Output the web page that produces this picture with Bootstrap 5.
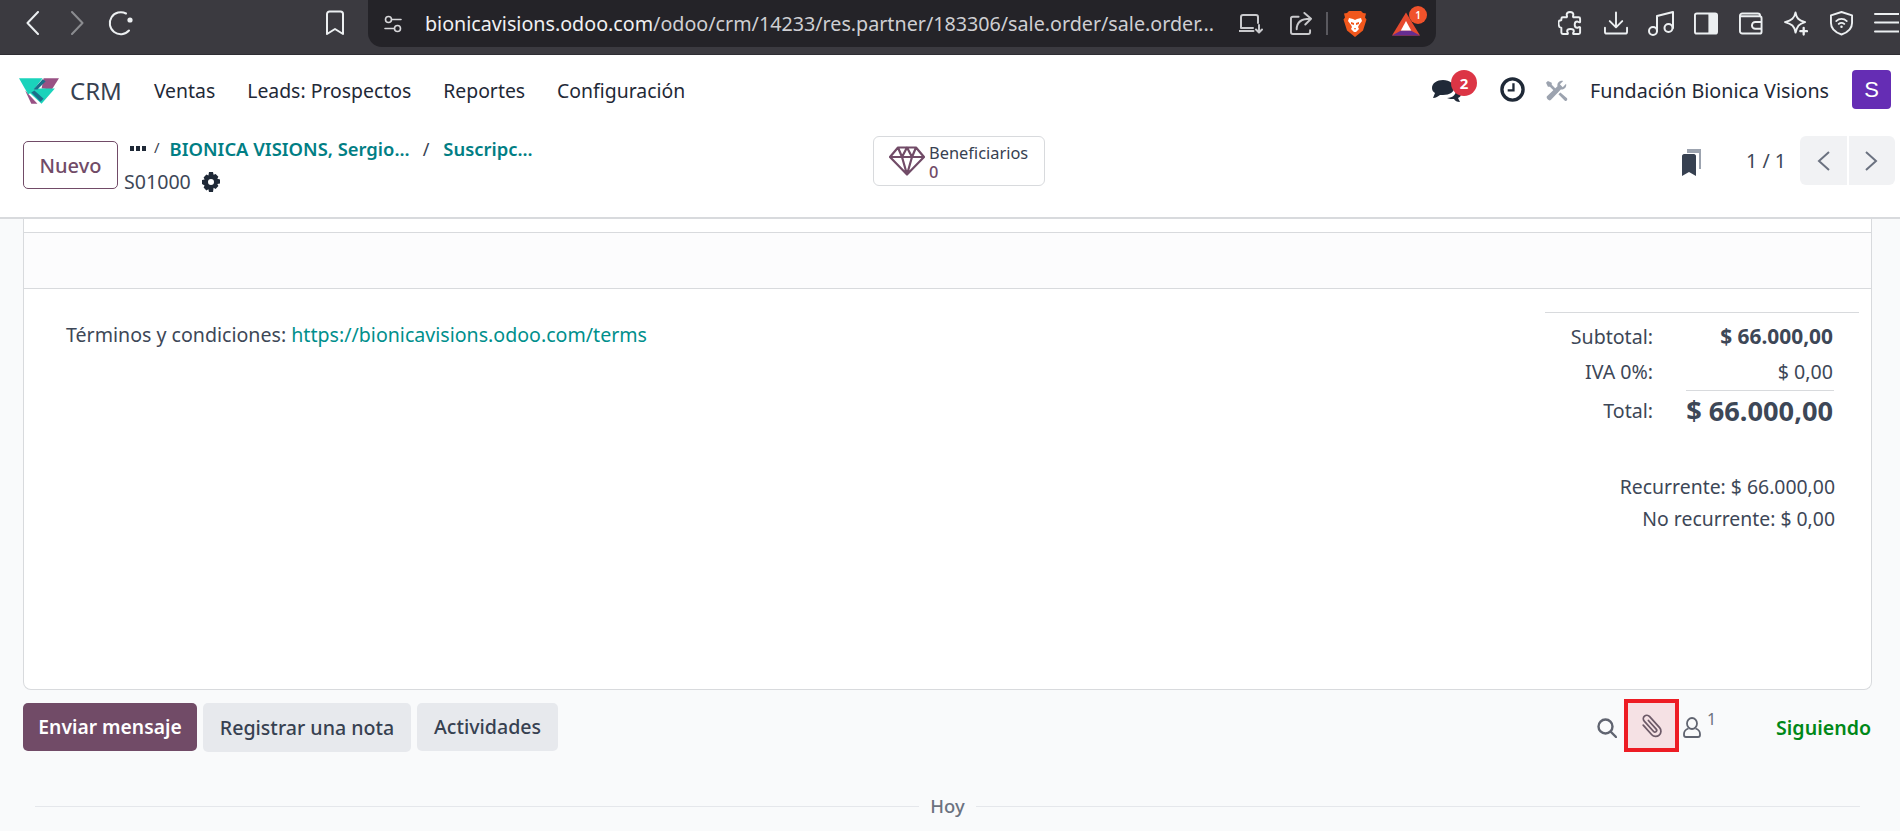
<!DOCTYPE html>
<html lang="es">
<head>
<meta charset="utf-8">
<title>CRM</title>
<link href="https://cdn.jsdelivr.net/npm/bootstrap@5.3.0/dist/css/bootstrap.min.css" rel="stylesheet">
<style>
html,body{height:831px;overflow:hidden}
body{font-family:"Noto Sans","Open Sans",sans-serif;font-size:19.6px;color:#3d4757;background:#f9fafb}
svg{display:block;flex:none}
.tb{height:55px;background:#3b3a40;border-bottom:1px solid #2e2d33;padding:0 1px 8px 26px}
.tb-ic{stroke:#eceff1;fill:none;stroke-width:2;stroke-linecap:round;stroke-linejoin:round}
.dim{opacity:.45}
.ml19{margin-left:19px}.ml20{margin-left:20px}.ml21{margin-left:21px}.ml22{margin-left:22px}.ml23{margin-left:23px}.ml24{margin-left:24px}.ml32{margin-left:32px}.ml122{margin-left:122px}.ml191{margin-left:191px}
.urlbar{width:1068px;height:47px;background:#242328;border-radius:0 0 14px 14px;align-self:flex-start;padding-left:16px;padding-top:0}
.urlic{stroke:#d7d7da;stroke-width:1.6}
.urlic2{stroke:#c9c9cc}
.urltxt{font-size:19.7px;color:#cfcfd3;margin-left:23px;width:814px;white-space:nowrap}
.urltxt b{font-weight:400;color:#f0f0f2}
.gap27{margin-left:27px}
.sep{width:2px;height:23px;background:#5a595f;margin:0 15px 0 14px}
.batw{margin-left:25px;width:28px;height:24px}
.bat-b{width:18px;height:18px;background:#f0522b;border-radius:50%;color:#fff;font-size:10px;line-height:18px;text-align:center;font-weight:600;top:-6px;left:17px}
.topnav{height:72px;background:#fff;padding-left:19px;padding-right:9px}
.appname{font-size:24px;color:#374151;margin-left:11px;margin-right:32px}
.menuit{color:#1f2937;margin-right:32px;font-size:19.4px}
.chatw{width:28px;height:23px}
.msgb{width:26px;height:26px;border-radius:50%;background:#dc3545;color:#fff;font-size:15px;font-weight:700;line-height:26px;text-align:center;top:-10px;left:19px}
.clk{margin-left:40px;margin-top:-3px}
.tls{margin-left:21px;margin-top:-2px}
.compny{color:#1f2937;font-size:19.7px;margin-left:22px;margin-right:23px}
.ava{width:39px;height:39px;background:#652db4;color:#fff;border-radius:4px;font-size:22px;font-family:"Liberation Sans",sans-serif;margin-top:-3px}
.cpanel{height:92px;background:#fff;border-bottom:2px solid #d8dadd;padding-left:23px;padding-right:5px}
.btn-nv{width:95px;height:48px;border:1px solid #714b67;border-radius:5px;background:#fff;color:#714b67;font-size:20px;font-weight:500;padding:2px 0 0;margin-top:14px}
.crumbs{margin-left:6px;margin-top:7px;width:749px}
.crumb1{height:30px;padding-left:6px}
.crumb2{height:36px}
.dots{margin-right:8px}
.tealb{color:#017e84;font-weight:600;font-size:18.4px}
.crsl{color:#374151;font-size:15px;margin-top:-4px}
.crsl2{color:#374151;font-size:18px;margin:0 14px 0 13px}
.bionica{margin-left:10px}
.gear{margin-left:10px}
.stat{width:172px;height:50px;border:1px solid #d8dadd;border-radius:6px;background:#fff;margin-top:9px;padding-left:15px}
.stat-t{font-size:16.4px;line-height:19.5px;color:#374151;margin-left:4px;padding-top:2px}
.stat-n{color:#714b67;font-weight:500}
.pgw{margin-top:9px}
.bmk{margin-top:4px}
.pgtxt{margin-left:45px;margin-right:14px}
.pgr{width:95px;height:49px;background:#f1f2f4;border-radius:6px}
.pgr>div{flex:1}
.pgr>div+div{border-left:2px solid #fff}
.main{padding:0 28px 0 23px}
.sheet{background:#fff;border:1px solid #d8dadd;border-top:0;border-radius:0 0 8px 8px;height:471px}
.r1{height:14px;background:#fff;border-bottom:1px solid #d8dadd}
.r2{height:56px;background:#fcfcfd;border-bottom:1px solid #d8dadd}
.terms{padding:23px 12px 0 42px}
.termtxt{margin-top:8px}
.terms a{color:#008f8c;text-decoration:none}
.totals{width:314px}
.tline{border-top:1px solid #d8dadd;height:7px}
.tline2{border-top:1px solid #d8dadd;margin:1px 25px 0 141px}
.tr-l{width:108px;text-align:right;flex:none}
.tr-v{flex:1;text-align:right}
.tr1{height:35px;padding-right:26px}
.tr2{height:40px;padding-right:26px}
.semi{font-size:20.9px;font-weight:700}
.big{font-size:27.2px;font-weight:700}
.recur{margin-top:40px;padding-right:24px;line-height:32px;font-size:19.4px}
.chat{padding-top:13px;height:61px}
.btn-p,.btn-g{height:48px;padding:0;border:0;border-radius:5px;font-size:19.6px;font-weight:500}
.btn-p{width:174px;background:#714b67;color:#fff;font-weight:600;font-size:19.3px}
.btn-g{background:#e7e9ed;color:#374151;margin-left:6px}
.w-reg{width:208px;height:49px}
.w-act{width:141px}
.redbox{width:55px;height:53px;border:4px solid #ed1c24;background:#f5e1e4;margin-left:7px;margin-top:-4px}
.persn{margin-left:4px}
.sig{color:#008818;font-weight:600;font-size:19.6px;margin-left:60px;margin-right:1px}
.uno{font-size:16px;color:#6b7280;margin-left:6px;margin-top:-18px;line-height:1}
.rule{height:1px;background:#e5e7eb;flex:1}
.hoy{font-size:18.4px;color:#6b7280;font-weight:500;margin:0 11px;line-height:1}
.daysep{margin:46px 12px 0}
</style>
</head>
<body>
<div class="tb d-flex align-items-center">
  <svg class="tb-ic" width="13" height="24" viewBox="0 0 13 24"><path d="M12 1 1.500 12 12 23"/></svg>
  <svg class="tb-ic dim ml32" width="13" height="24" viewBox="0 0 13 24"><path d="M1 1l10.500 11L1 23"/></svg>
  <svg class="tb-ic ml24" width="26" height="26" viewBox="0 0 26 26"><path d="M21 20.500a11 11 0 1 1-3-17"/><circle cx="22" cy="10" r="2.600" fill="#eceff1" stroke="none"/></svg>
  <svg class="tb-ic ml191" width="20" height="26" viewBox="0 0 20 26"><path d="M2 4a2.500 2.500 0 0 1 2.500-2.500h11A2.500 2.500 0 0 1 18 4v20l-8-5-8 5z"/></svg>
  <div class="urlbar d-flex align-items-center ml23">
    <svg class="tb-ic urlic" width="18" height="18" viewBox="0 0 18 18"><circle cx="4.500" cy="4.500" r="3"/><path d="M8 4.500h9M1 13.500h9"/><circle cx="13.500" cy="13.500" r="3"/></svg>
    <div class="urltxt"><b>bionicavisions.odoo.com</b>/odoo/crm/14233/res.partner/183306/sale.order/sale.order...</div>
    <svg class="tb-ic urlic2" width="24" height="20" viewBox="0 0 24 20"><path d="M2 14V3a2 2 0 0 1 2-2h13a2 2 0 0 1 2 2v6M0.500 17h14M3 14h11M20 11v7M17 15.500l3 3 3-3"/></svg>
    <svg class="tb-ic urlic2 gap27" width="22" height="23" viewBox="0 0 23 24"><path d="M9 5H3a2 2 0 0 0-2 2v14a2 2 0 0 0 2 2h16a2 2 0 0 0 2-2v-2M7 18c0-7 4-11 14-11M15 1l7 6-6 6"/></svg>
    <div class="sep"></div>
    <svg width="24" height="28" viewBox="0 0 24 28"><path fill="#f1571c" d="M6 1h12l2 2 3 .5-1 4 1.500 2-3.500 11-8 6.500-8-6.500L.5 9.500 2 7.500l-1-4L4 3z"/><path fill="#fff" d="M6 8l4 1 2 1 2-1 4-1 1 3-3 4-1 2 1 2-3 3h-2l-3-3 1-2-1-2-3-4z"/><path fill="#f1571c" d="M8 12l3 1v2l-3-1zM16 12l-3 1v2l3-1zM11 18h2l-1 2z"/></svg>
    <div class="position-relative batw">
      <svg width="28" height="24" viewBox="0 0 29 24"><path fill="#e64a2e" d="M14.500 0 29 24H0z"/><path fill="#fff" d="M14.500 9 20 19H9z"/><path fill="#662d91" d="M0 24l9-5h11l9 5z"/></svg>
      <div class="bat-b position-absolute">1</div>
    </div>
  </div>
  <svg class="tb-ic ml122" width="25" height="26" viewBox="0 0 26 26"><path d="M9 4.500c0-4 7-4 7 0 0 1-1 1.500 0 2.500h5.500a1.500 1.500 0 0 1 1.500 1.500v3.500c-1 1-2-.5-3-.5-3.500 0-3.500 6.500 0 6.500 1 0 2-1.500 3-.5v5.500a1.500 1.500 0 0 1-1.500 1.500H16c-1-1 .5-2 .5-3 0-3-7-3-7 0 0 1 1.500 2 .5 3H5a1.500 1.500 0 0 1-1.500-1.500V18c-1-1-2 .5-2.500-2-.5-1.500-.5-4 0-5 .5-1.500 1.500 0 2.500-1V8.500A1.500 1.500 0 0 1 5 7h4c1-1 0-1.500 0-2.500z"/></svg>
  <svg class="tb-ic ml21" width="24" height="24" viewBox="0 0 25 24"><path d="M12.500 1v15M6 10l6.500 6.500L19 10M1 17v4a2 2 0 0 0 2 2h19a2 2 0 0 0 2-2v-4"/></svg>
  <svg class="tb-ic ml20" width="26" height="26" viewBox="0 0 26 26"><path d="M9 21V6l16-4v16"/><circle cx="5" cy="21" r="4"/><circle cx="20.500" cy="18" r="4"/></svg>
  <svg class="ml20" width="24" height="23" viewBox="0 0 25 23"><rect x="1" y="1" width="23" height="21" rx="2" fill="none" stroke="#eceff1" stroke-width="2"/><path d="M15 1h7a2 2 0 0 1 2 2v17a2 2 0 0 1-2 2h-7z" fill="#eceff1"/></svg>
  <svg class="tb-ic ml21" width="24" height="23" viewBox="0 0 25 23"><path d="M22 4V3.500A2.500 2.500 0 0 0 19.500 1H3.500A2.500 2.500 0 0 0 1 3.500v16A2.500 2.500 0 0 0 3.500 22h18a2 2 0 0 0 2-2V6a2 2 0 0 0-2-2H1M23.500 10H17a3 3 0 0 0 0 7h6.500"/></svg>
  <svg class="tb-ic ml21" width="24" height="25" viewBox="0 0 25 25"><path d="M12 1c1 6 3 8 10 10-7 2-8 4-10 11C11 15 8 13 1 11c7-2 10-4 11-10z"/><path d="M20.500 17v7M17 20.500h7" stroke-width="2.400"/></svg>
  <svg class="tb-ic ml22" width="23" height="26" viewBox="0 0 24 26"><path d="M12 1.500 23 5v8c0 6-5 10-11 12C6 23 1 19 1 13V5z"/><path d="M6.500 11c3-3 8-3 11 0M9 14c2-1.500 4-1.500 6 0" stroke-width="1.800"/><circle cx="12" cy="17" r="1.300" fill="#eceff1" stroke="none"/></svg>
  <svg class="tb-ic ml21" width="25" height="20" viewBox="0 0 25 20"><path d="M1 1h24M1 9.500h24M1 18.500h24"/></svg>
</div>

<div class="topnav d-flex align-items-center">
  <svg width="40" height="26" viewBox="0 0 39 25"><path fill="#985184" d="M24 0H39L32 11 22 10Z"/><path fill="#985184" d="M6 12 18 25H12Z"/><path fill="#1ad3bb" d="M0 0H23L13 13 9 16Z"/><path fill="#1ad3bb" d="M10 14 16 10H35L22 25Z"/><path fill="#1a6f8a" d="M14 11 23 1 26 3 18 11Z"/><path fill="#1a6f8a" d="M12 14 15 12 24 20 21 23Z"/></svg>
  <span class="appname">CRM</span>
  <span class="menuit">Ventas</span>
  <span class="menuit">Leads: Prospectos</span>
  <span class="menuit">Reportes</span>
  <span class="menuit">Configuración</span>
  <div class="ms-auto d-flex align-items-center">
    <div class="position-relative chatw">
      <svg width="30" height="23" viewBox="0 0 30 23"><path fill="#1f2937" d="M11 0C5 0 0 3 0 8c0 2 1 4 3 5l-2 5c3 0 5-2 7-3h3c7 0 11-3 11-7s-4-8-11-8z"/><path fill="#1f2937" d="M24 8c2 1 5 3 5 6 0 2-1 3-3 4l2 4c-3 0-5-1-6-3-2 0-5 0-7-1 6 0 10-4 9-10z"/></svg>
      <div class="msgb position-absolute">2</div>
    </div>
    <svg class="clk" width="25" height="25" viewBox="0 0 26 26"><circle cx="13" cy="13" r="11" fill="none" stroke="#1f2937" stroke-width="3.500"/><path d="M14 6.500V14H8" fill="none" stroke="#1f2937" stroke-width="2.400"/></svg>
    <svg class="tls" width="22" height="21" viewBox="0 0 23 22"><path fill="#9ca3af" d="M1 17 12 6.500c-.7-3 2-6.500 6-5.500l-3.500 3.500 3 3L21 4c1 4-2.500 6.500-5.500 6L5 21c-2 1.500-5.500-2-4-4z"/><path fill="#9ca3af" d="M2 1l4 2v2l7 7-2 2-7-7H2L0 3zM15 13l7 6c1 2-1 3-2 3l-7-7z"/></svg>
    <span class="compny">Fundación Bionica Visions</span>
    <div class="ava d-flex align-items-center justify-content-center">S</div>
  </div>
</div>

<div class="cpanel d-flex align-items-start">
  <button class="btn-nv" type="button">Nuevo</button>
  <div class="crumbs">
    <div class="d-flex align-items-center crumb1">
      <svg class="dots" width="16" height="6" viewBox="0 0 16 6"><path fill="#1f2937" d="M0 0h4v5H0zM6 0h4v5H6zM12 0h4v5h-4z"/></svg>
      <span class="crsl">/</span>
      <span class="tealb bionica">BIONICA VISIONS, Sergio...</span>
      <span class="crsl2">/</span>
      <span class="tealb">Suscripc...</span>
    </div>
    <div class="d-flex align-items-center crumb2">
      <span>S01000</span>
      <svg class="gear" width="20" height="20" viewBox="0 0 20 20"><path fill="#1f2937" fill-rule="evenodd" d="M8 0h4l.6 2.800 2-.9 2.800 2.800-1.100 2 2.700.7v4l-2.700.7 1.100 2-2.800 2.800-2-1.100L12 20H8l-.6-2.700-2 1.100-2.800-2.800 1-2L1 12V8l2.600-.6-1-2 2.800-2.800 2 1zM10 7a3 3 0 1 0 0 6 3 3 0 0 0 0-6z"/></svg>
    </div>
  </div>
  <div class="stat d-flex align-items-center">
    <svg width="36" height="30" viewBox="0 0 36 30" fill="none" stroke="#714b67" stroke-width="2.200" stroke-linejoin="round"><path d="M9 1.500h18L35 11 18 28.500 1 11zM1 11h34M9 1.500 13 11l5 17.500L23 11l4-9.500M13 11l5-9.500 5 9.500"/></svg>
    <div class="stat-t"><div>Beneficiarios</div><div class="stat-n">0</div></div>
  </div>
  <div class="ms-auto d-flex align-items-center pgw">
    <svg class="bmk" width="19" height="27" viewBox="0 0 19 27"><path fill="#9ca3af" d="M5 0h14v20h-2V4H5z"/><path fill="#374151" d="M0 7c0-1 1-2 2-2h10c1 0 2 1 2 2v20l-7-4-7 4z"/></svg>
    <span class="pgtxt">1 / 1</span>
    <div class="pgr d-flex">
      <div class="d-flex align-items-center justify-content-center"><svg width="13" height="20" viewBox="0 0 13 20" fill="none" stroke="#6b7280" stroke-width="2"><path d="M12 1 2 10l10 9"/></svg></div>
      <div class="d-flex align-items-center justify-content-center"><svg width="13" height="20" viewBox="0 0 13 20" fill="none" stroke="#6b7280" stroke-width="2"><path d="M1 1l10 9-10 9"/></svg></div>
    </div>
  </div>
</div>

<div class="main">
  <div class="sheet">
    <div class="r1"></div>
    <div class="r2"></div>
    <div class="d-flex justify-content-between terms">
      <div class="termtxt">Términos y condiciones: <a href="#">https://bionicavisions.odoo.com/terms</a></div>
      <div class="totals">
        <div class="tline"></div>
        <div class="d-flex align-items-center tr1"><div class="tr-l">Subtotal:</div><div class="tr-v semi">$ 66.000,00</div></div>
        <div class="d-flex align-items-center tr1"><div class="tr-l">IVA 0%:</div><div class="tr-v">$ 0,00</div></div>
        <div class="tline2"></div>
        <div class="d-flex align-items-center tr2"><div class="tr-l">Total:</div><div class="tr-v big">$ 66.000,00</div></div>
        <div class="text-end recur">Recurrente: $ 66.000,00<br>No recurrente: $ 0,00</div>
      </div>
    </div>
  </div>
  <div class="chat d-flex align-items-start">
    <button class="btn-p" type="button">Enviar mensaje</button>
    <button class="btn-g w-reg" type="button">Registrar una nota</button>
    <button class="btn-g w-act" type="button">Actividades</button>
    <div class="ms-auto d-flex align-items-center">
      <svg width="20" height="20" viewBox="0 0 20 20" fill="none" stroke="#606470" stroke-width="2.400" stroke-linecap="round"><circle cx="8.500" cy="8.500" r="7"/><path d="M14 14l5 5"/></svg>
      <div class="redbox d-flex align-items-center justify-content-center">
        <svg width="28" height="28" viewBox="0 0 24 24" fill="none" stroke="#6d5a68" stroke-width="1.500" stroke-linecap="round"><g transform="rotate(-42 12 12)"><path d="M7.500 7v11a4.500 4.500 0 0 0 9 0V5a3 3 0 0 0-6 0v12a1.500 1.500 0 0 0 3 0V7"/></g></svg>
      </div>
      <svg class="persn" width="18" height="21" viewBox="0 0 18 21" fill="none" stroke="#606470" stroke-width="1.800"><ellipse cx="9" cy="6.500" rx="5" ry="5.500"/><path d="M5.500 11.500C2.500 12.500 1 14.500 1 17v1a2 2 0 0 0 2 2h12a2 2 0 0 0 2-2v-1c0-2.500-1.500-4.500-4.500-5.500"/></svg>
      <span class="uno">1</span>
      <span class="sig">Siguiendo</span>
    </div>
  </div>
  <div class="d-flex align-items-center daysep">
    <div class="rule"></div>
    <span class="hoy">Hoy</span>
    <div class="rule"></div>
  </div>
</div>
</body>
</html>
